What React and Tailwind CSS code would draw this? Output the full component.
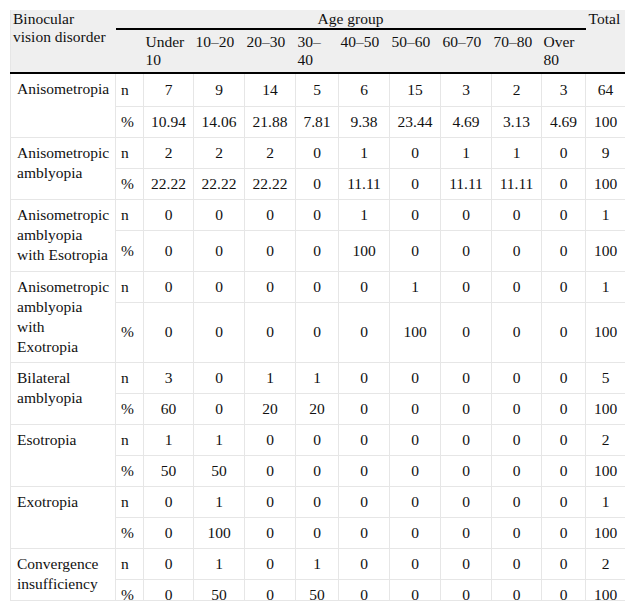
import React from "react";

const ages = ["Under 10", "10–20", "20–30", "30–40", "40–50", "50–60", "60–70", "70–80", "Over 80"];

// nh / ph: row heights, the long labels push the % row down
const rows = [
    { label: "Anisometropia", nh: "h-[33px]", ph: "", n: [7, 9, 14, 5, 6, 15, 3, 2, 3, 64], p: ["10.94", "14.06", "21.88", "7.81", "9.38", "23.44", "4.69", "3.13", "4.69", "100"] },
    { label: "Anisometropic amblyopia", nh: "", ph: "", n: [2, 2, 2, 0, 1, 0, 1, 1, 0, 9], p: ["22.22", "22.22", "22.22", "0", "11.11", "0", "11.11", "11.11", "0", "100"] },
    { label: "Anisometropic amblyopia with Esotropia", nh: "", ph: "h-[41px]", n: [0, 0, 0, 0, 1, 0, 0, 0, 0, 1], p: [0, 0, 0, 0, 100, 0, 0, 0, 0, 100] },
    { label: "Anisometropic amblyopia with Exotropia", nh: "", ph: "h-[60px]", n: [0, 0, 0, 0, 0, 1, 0, 0, 0, 1], p: [0, 0, 0, 0, 0, 100, 0, 0, 0, 100] },
    { label: "Bilateral amblyopia", nh: "", ph: "", n: [3, 0, 1, 1, 0, 0, 0, 0, 0, 5], p: [60, 0, 20, 20, 0, 0, 0, 0, 0, 100] },
    { label: "Esotropia", nh: "", ph: "", n: [1, 1, 0, 0, 0, 0, 0, 0, 0, 2], p: [50, 50, 0, 0, 0, 0, 0, 0, 0, 100] },
    { label: "Exotropia", nh: "", ph: "", n: [0, 1, 0, 0, 0, 0, 0, 0, 0, 1], p: [0, 100, 0, 0, 0, 0, 0, 0, 0, 100] },
    { label: "Convergence insufficiency", nh: "", ph: "", n: [0, 1, 0, 1, 0, 0, 0, 0, 0, 2], p: [0, 50, 0, 50, 0, 0, 0, 0, 0, 100] },
];

const widths = [105, 28, 50, 51, 51, 43, 51, 51, 51, 50, 44, 40];

const serif = "font-['Liberation_Serif','Times_New_Roman',serif] text-[15.5px]";
const cell = `${serif} border border-[#e6e6e6] py-[5px] leading-[20px] font-normal`;
const head = `${serif} font-normal leading-[18px] border-b-2 border-black`;

const App = () => (
    <div className={`${serif} bg-white min-h-[611px] p-[10px] text-[#111]`}>
        {/* clipped table box */}
        <div className="h-[591px] overflow-hidden border-b border-[#e6e6e6]">
            <table className={`${serif} table-fixed border-collapse w-[615px]`}>
                <colgroup>
                    {widths.map((w, i) => (
                        <col key={i} style={{ width: w }} />
                    ))}
                </colgroup>
                <thead className="bg-[#efefef]">
                    <tr>
                        <th rowSpan={2} className={`${head} text-left align-top pl-[2px] pr-[3px] pt-0 border-l border-l-[#e6e6e6]`}>
                            Binocular vision disorder
                        </th>
                        <th colSpan={10} className={`${head} text-center p-0`}>
                            Age group
                        </th>
                        <th rowSpan={2} className={`${head} text-left align-top p-0 pl-[3px]`}>
                            Total
                        </th>
                    </tr>
                    <tr>
                        <th className={head}></th>
                        {ages.map((a) => (
                            <th key={a} className={`${head} text-left align-top pl-[2px] pr-[3px] py-[3px]`}>
                                {a}
                            </th>
                        ))}
                    </tr>
                </thead>
                <tbody>
                    {rows.map((r) => (
                        <React.Fragment key={r.label}>
                            <tr className={r.nh}>
                                <th rowSpan={2} className={`${cell} text-left align-top pl-[6px] pr-[6px]`}>{r.label}</th>
                                <td className={`${cell} pl-[5px]`}>n</td>
                                {r.n.map((v, i) => (
                                    <td key={i} className={`${cell} text-center`}>{v}</td>
                                ))}
                            </tr>
                            <tr className={r.ph}>
                                <td className={`${cell} pl-[5px]`}>%</td>
                                {r.p.map((v, i) => (
                                    <td key={i} className={`${cell} text-center`}>{v}</td>
                                ))}
                            </tr>
                        </React.Fragment>
                    ))}
                </tbody>
            </table>
        </div>
    </div>
);

export default App;
